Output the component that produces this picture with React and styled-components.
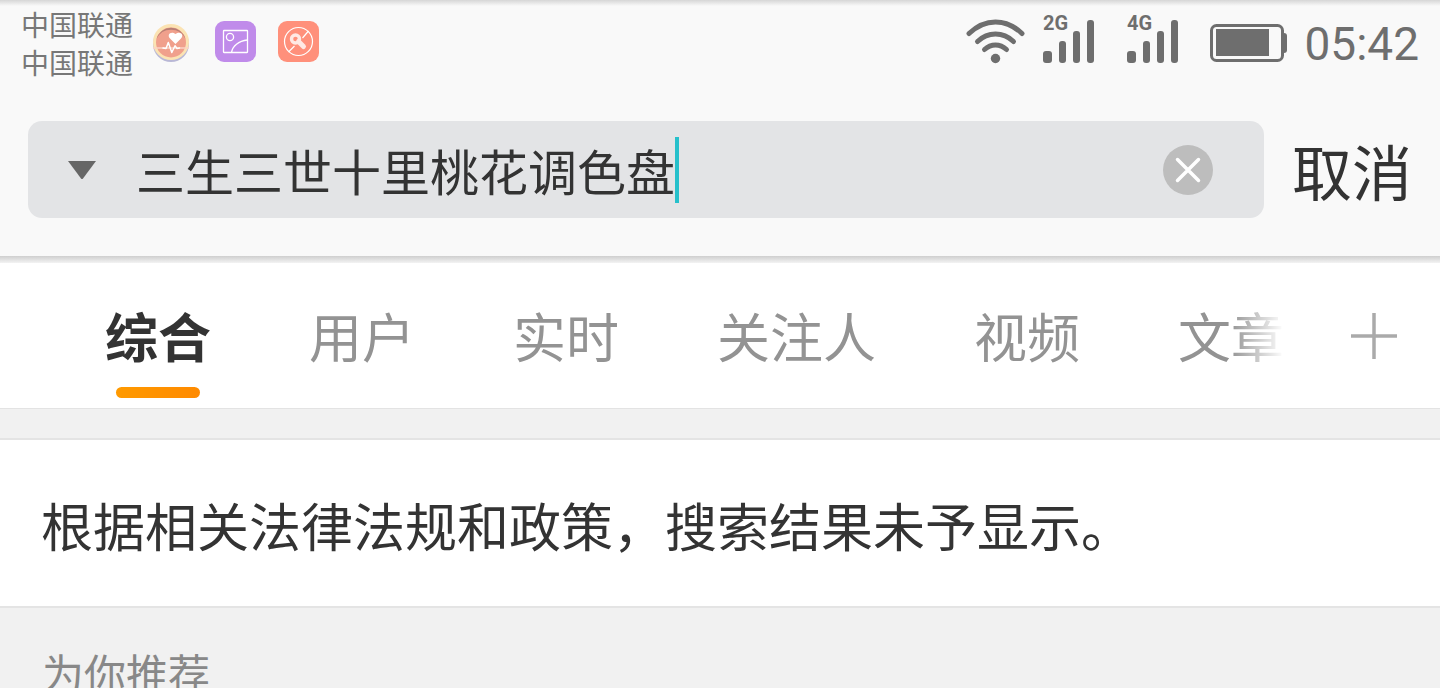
import React, { useState } from 'react';
import styled, { createGlobalStyle } from 'styled-components';

const GlobalStyle = createGlobalStyle`
  * {
    box-sizing: border-box;
  }

  body {
    margin: 0;
    background: #f1f1f1;
    font-family: 'Noto Sans CJK SC', sans-serif;
    color: #333;
  }

  button,
  input {
    margin: 0;
    padding: 0;
    border: none;
    background: none;
    font-family: inherit;
    color: inherit;
  }

  button {
    cursor: pointer;
  }

  svg {
    display: block;
    flex-shrink: 0;
  }
`;

const Page = styled.div`
  height: 100vh;
  overflow: hidden;
`;

const Header = styled.header`
  background: linear-gradient(#d6d6d6, #f9f9f9 6px);
`;

const StatusBar = styled.div`
  display: flex;
  align-items: center;
  justify-content: space-between;
  height: 86px;
  padding: 0 21px;
  color: #6e6e6e;
`;

const StatusGroup = styled.div`
  display: flex;
  align-items: center;
  gap: ${props => props.$gap}px;
`;

const Carriers = styled.div`
  font-size: 28px;
  line-height: 38px;
  color: #777;
  white-space: nowrap;
`;

const Clock = styled.time`
  padding-top: 2px;
  font-family: Roboto, sans-serif;
  font-size: 46px;
  line-height: 54px;
`;

const SearchRow = styled.form`
  display: flex;
  align-items: center;
  gap: 28px;
  padding: 35px 28px 38px;
`;

const SearchBox = styled.div`
  display: flex;
  flex: 1;
  align-items: center;
  min-width: 0;
  height: 97px;
  padding: 0 51px 0 39px;
  border-radius: 14px;
  background: #e3e4e6;
`;

const SearchInput = styled.input`
  margin-left: 39px;
  min-width: 1em;
  height: 72px;
  font-size: 49px;
  line-height: 72px;
  outline: none;
  caret-color: transparent;
`;

const Caret = styled.span`
  flex-shrink: 0;
  width: 4px;
  height: 66px;
  background: #26c0cb;
`;

const ClearButton = styled.button`
  margin-left: auto;
`;

const CancelButton = styled.button`
  font-size: 60px;
  line-height: 84px;
  white-space: nowrap;
`;

const HeaderShadow = styled.div`
  height: 7px;
  background: linear-gradient(#cfcfcf, #f3f3f3);
`;

const TabBar = styled.nav`
  display: flex;
  height: 146px;
  background: #fff;
  border-bottom: 1px solid #e3e3e3;
`;

const TabList = styled.div`
  display: flex;
  flex: 1;
  gap: 98px;
  min-width: 0;
  padding-left: 105px;
  overflow: hidden;
  mask-image: linear-gradient(to right, #000 calc(100% - 54px), transparent);
`;

const Tab = styled.button`
  display: flex;
  flex-direction: column;
  flex-shrink: 0;
  align-items: center;
  padding-top: 33px;
  font-size: 53px;
  line-height: 78px;
  font-weight: ${props => (props.$active ? 700 : 400)};
  color: ${props => (props.$active ? '#333' : '#939393')};
  white-space: nowrap;

  &::after {
    content: '';
    width: 84px;
    height: 11px;
    margin-top: 13px;
    border-radius: 6px;
    background: ${props => (props.$active ? 'linear-gradient(to right, #ff9a00, #ff8a00)' : 'none')};
  }
`;

const AddButton = styled.button`
  display: flex;
  align-items: center;
  width: 48px;
  margin: 0 42px 0 66px;
`;

const Divider = styled.div`
  height: 31px;
  border-bottom: 2px solid #e4e4e4;
`;

const Notice = styled.p`
  margin: 0;
  padding: 46px 41px 42px;
  border-bottom: 2px solid #e4e4e4;
  background: #fff;
  font-size: 52px;
  line-height: 78px;
`;

const SectionTitle = styled.h2`
  margin: 0;
  padding: 32px 42px;
  font-size: 42px;
  line-height: 64px;
  font-weight: 400;
  color: #888;
`;

const HealthIcon = () => (
  <svg width="42" height="44" viewBox="0 0 42 44" aria-hidden="true">
    <circle cx="20" cy="23" r="18" fill="#b9b8d6" />
    <circle cx="20" cy="21" r="18" fill="#fbe3b3" />
    <circle cx="20" cy="21.500" r="15" fill="#f0a08c" />
    <path d="M5.500 18a15 15 0 0 1 29 0a16 16 0 0 0-29 0z" fill="#b87f74" />
    <path d="M24.500 23l-5.500-5.500C15.500 13.500 20 9.500 24.500 13C29 9.500 33.500 13.500 30 17.500z" fill="#fff" />
    <path d="M2 27h36" stroke="#fbd3c4" strokeWidth="1.500" />
    <path
      d="M12 27l3 .500 2.300-6 3.500 10 3.200-6.700 2 2.700 2.500-.500"
      fill="none"
      stroke="#fff"
      strokeWidth="1.500"
      strokeLinecap="round"
      strokeLinejoin="round"
    />
  </svg>
);

const GalleryIcon = () => (
  <svg width="41" height="44" viewBox="0 0 41 44" aria-hidden="true">
    <rect width="41" height="41" rx="9" fill="#c08bea" />
    <g fill="none" stroke="#fff" strokeWidth="1.300">
      <rect x="8.500" y="9.500" width="24" height="22" rx="0.500" />
      <circle cx="15" cy="16" r="3.600" />
      <path d="M16.500 31.500c1-6.500 7-11.500 16-12.500" />
    </g>
  </svg>
);

const ToolIcon = () => (
  <svg width="41" height="44" viewBox="0 0 41 44" aria-hidden="true">
    <rect width="41" height="41" rx="9" fill="#ff907b" />
    <g fill="none" stroke="#fff">
      <circle cx="20.500" cy="20.500" r="14" strokeWidth="1.200" />
      <path d="M30.500 10l-6 7M16.500 25l-6 6" strokeWidth="1.200" />
      <circle cx="17.500" cy="18" r="4" strokeWidth="3.400" stroke="#ffe9e4" />
      <path d="M20.500 20.500l5 5" strokeWidth="5" strokeLinecap="round" stroke="#ffe9e4" />
    </g>
  </svg>
);

const WifiIcon = () => (
  <svg width="60" height="48" viewBox="0 0 60 48" role="img" aria-label="Wi-Fi">
    <g fill="none" stroke="currentColor" strokeWidth="5" strokeLinecap="round">
      <path d="M3 14.500C19-1 40-1 56 14.500" />
      <path d="M11.500 22.500C22 12.500 37 12.500 47.500 22.500" />
      <path d="M18.500 30.500C25 24.500 34 24.500 40.500 30.500" />
    </g>
    <circle cx="29.500" cy="39.500" r="4.700" fill="currentColor" />
  </svg>
);

const SignalLabel = styled.text`
  font-family: Roboto, sans-serif;
  font-size: 20px;
  font-weight: 700;
`;

const SignalIcon = ({ label }) => (
  <svg width="54" height="68" viewBox="0 -6 54 68" fill="currentColor" role="img" aria-label={label}>
    <SignalLabel x="1" y="15">{label}</SignalLabel>
    <rect x="1" y="36" width="9" height="12" rx="3" />
    <rect x="17" y="26" width="7" height="22" rx="3" />
    <rect x="31" y="16" width="7" height="32" rx="3" />
    <rect x="45" y="5" width="7" height="43" rx="3" />
  </svg>
);

const BatteryIcon = () => (
  <svg width="78" height="38" viewBox="0 0 78 38" role="img" aria-label="电量">
    <rect x="1.500" y="1.500" width="71" height="35" rx="5" fill="none" stroke="currentColor" strokeWidth="3" />
    <rect x="6" y="5" width="53" height="27" fill="currentColor" />
    <path d="M72 9h2q3 0 3 3v14q0 3-3 3h-2z" fill="currentColor" />
  </svg>
);

const tabs = ['综合', '用户', '实时', '关注人', '视频', '文章'];

function App() {
  const [query, setQuery] = useState('三生三世十里桃花调色盘');
  const [activeTab, setActiveTab] = useState('综合');

  return (
    <Page>
      <GlobalStyle />
      <Header>
        <StatusBar>
          <StatusGroup $gap={18}>
            <Carriers>
              <div>中国联通</div>
              <div>中国联通</div>
            </Carriers>
            <StatusGroup $gap={22}>
              <HealthIcon />
              <GalleryIcon />
              <ToolIcon />
            </StatusGroup>
          </StatusGroup>
          <StatusGroup $gap={16}>
            <WifiIcon />
            <StatusGroup $gap={30}>
              <SignalIcon label="2G" />
              <SignalIcon label="4G" />
              <BatteryIcon />
            </StatusGroup>
            <Clock>05:42</Clock>
          </StatusGroup>
        </StatusBar>

        <SearchRow onSubmit={e => e.preventDefault()}>
          <SearchBox>
            <button type="button" aria-label="搜索类型">
              <svg width="30" height="20" viewBox="0 0 30 20">
                <path d="M1 1h28L16 18.500q-1 1-2 0z" fill="#666" />
              </svg>
            </button>
            <SearchInput
              type="text"
              aria-label="搜索"
              value={query}
              onChange={e => setQuery(e.target.value)}
              style={{ width: `${query.length}em` }}
            />
            <Caret />
            <ClearButton type="button" aria-label="清除" onClick={() => setQuery('')}>
              <svg width="50" height="50" viewBox="0 0 50 50">
                <circle cx="25" cy="25" r="25" fill="#bdbdbd" />
                <path d="M14.500 14.500l21 21M35.500 14.500l-21 21" stroke="#fff" strokeWidth="3.500" strokeLinecap="round" />
              </svg>
            </ClearButton>
          </SearchBox>
          <CancelButton type="button">取消</CancelButton>
        </SearchRow>
      </Header>
      <HeaderShadow />

      <TabBar>
        <TabList>
          {tabs.map(tab => (
            <Tab key={tab} type="button" $active={tab === activeTab} onClick={() => setActiveTab(tab)}>
              {tab}
            </Tab>
          ))}
        </TabList>
        <AddButton type="button" aria-label="添加">
          <svg width="48" height="48" viewBox="0 0 48 48">
            <path d="M1 24h46M24 1v46" stroke="#aaa" strokeWidth="3.500" />
          </svg>
        </AddButton>
      </TabBar>

      <Divider />
      <main>
        <Notice>根据相关法律法规和政策，搜索结果未予显示。</Notice>
        <SectionTitle>为你推荐</SectionTitle>
      </main>
    </Page>
  );
}

export default App;
